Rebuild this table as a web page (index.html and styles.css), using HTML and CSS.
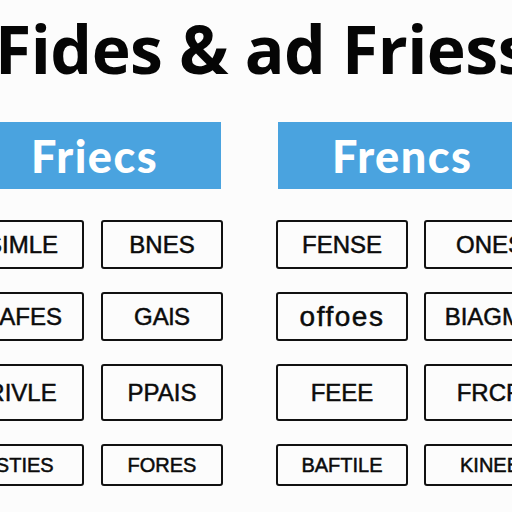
FILE: index.html
```html
<!DOCTYPE html>
<html>
<head>
<meta charset="utf-8">
<link rel="stylesheet" href="styles.css">
</head>
<body>
<div class="page">
  <h1 class="title">Fides &amp; ad Friess</h1>
  <div class="banners">
    <div class="banner banner-left">Friecs</div>
    <div class="banner banner-right">Frencs</div>
  </div>
  <div class="boards">
    <div class="group group-left">
      <div class="cell">SIMLE</div>
      <div class="cell">BNES</div>
      <div class="cell">HAFES</div>
      <div class="cell">GAlS</div>
      <div class="cell">RIVLE</div>
      <div class="cell">PPAIS</div>
      <div class="cell small">ISTIES</div>
      <div class="cell small">FORES</div>
    </div>
    <div class="group group-right">
      <div class="cell">FENSE</div>
      <div class="cell">ONES</div>
      <div class="cell lower">offoes</div>
      <div class="cell">BIAGML</div>
      <div class="cell">FEEE</div>
      <div class="cell">FRCR</div>
      <div class="cell small">BAFTILE</div>
      <div class="cell small">KINEB</div>
    </div>
  </div>
</div>
</body>
</html>
```
FILE: styles.css
```css
html, body {
  margin: 0;
  padding: 0;
  background: #fcfcfc;
}
.page {
  width: 512px;
  height: 512px;
  overflow: hidden;
  font-family: "Liberation Sans", Arial, sans-serif;
  color: #0b0b0b;
}
.title {
  margin: 0 0 0 -5px;
  padding-top: 12px;
  font-family: "Open Sans", sans-serif;
  font-weight: 700;
  font-size: 66px;
  line-height: 72px;
  letter-spacing: -0.5px;
  white-space: nowrap;
  color: #050505;
}
.banners {
  display: flex;
  margin-top: 38px;
}
.banner {
  height: 67px;
  background: #4aa3df;
  color: #fff;
  font-family: "Lato", sans-serif;
  font-weight: 900;
  font-size: 45px;
  letter-spacing: 1.5px;
  display: flex;
  align-items: center;
  flex-shrink: 0;
}
.banner-left {
  width: 221px;
  padding-left: 31px;
  box-sizing: border-box;
}
.banner-right {
  width: 240px;
  margin-left: 57px;
  padding-left: 54px;
  box-sizing: border-box;
}
.boards {
  display: flex;
  margin-top: 31px;
}
.group {
  display: grid;
  grid-template-rows: 49px 49px 57px 42px;
  row-gap: 23px;
  flex-shrink: 0;
}
.group-left {
  grid-template-columns: 124px 122px;
  column-gap: 17px;
  margin-left: -40px;
}
.group-right {
  grid-template-columns: 132px 132px;
  column-gap: 16px;
  margin-left: 53px;
}
.cell {
  border: 2px solid #111;
  border-radius: 3px;
  box-sizing: border-box;
  display: flex;
  align-items: center;
  justify-content: center;
  font-weight: 400;
  font-size: 24px;
  -webkit-text-stroke: 0.5px #0b0b0b;
  white-space: nowrap;
  overflow: hidden;
}
.cell.small {
  font-size: 20px;
}
.cell.lower {
  font-size: 28px;
  letter-spacing: 1.5px;
}
```
